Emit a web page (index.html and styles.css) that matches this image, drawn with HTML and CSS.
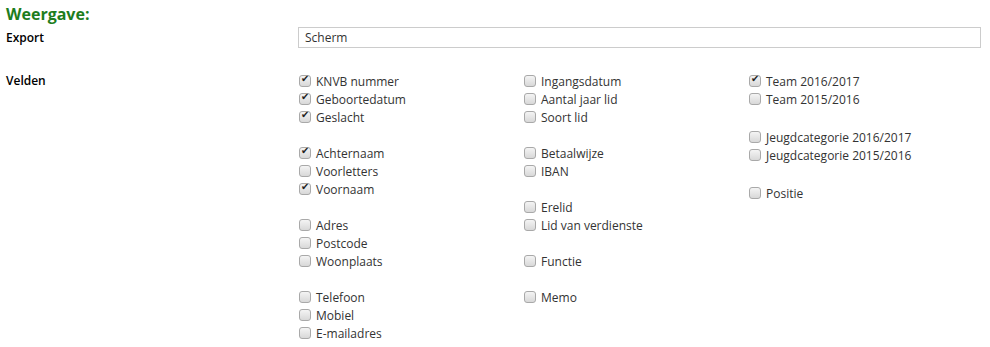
FILE: index.html
```html
<!DOCTYPE html>
<html lang="nl">
<head>
<meta charset="UTF-8">
<link rel="stylesheet" href="styles.css">
<title>Weergave</title>
</head>
<body>

<h2 class="section-title">Weergave:</h2>

<div class="form-row">
  <label class="form-label" for="export">Export</label>
  <div class="form-field">
    <input type="text" id="export" class="text-input" value="Scherm">
  </div>
</div>

<div class="form-row form-row-fields">
  <div class="form-label">Velden</div>
  <div class="form-field columns">

    <!-- kolom 1 -->
    <div class="col">
      <label class="check"><input type="checkbox" checked> KNVB nummer</label>
      <label class="check"><input type="checkbox" checked> Geboortedatum</label>
      <label class="check"><input type="checkbox" checked> Geslacht</label>
      <div class="gap"></div>
      <label class="check"><input type="checkbox" checked> Achternaam</label>
      <label class="check"><input type="checkbox"> Voorletters</label>
      <label class="check"><input type="checkbox" checked> Voornaam</label>
      <div class="gap"></div>
      <label class="check"><input type="checkbox"> Adres</label>
      <label class="check"><input type="checkbox"> Postcode</label>
      <label class="check"><input type="checkbox"> Woonplaats</label>
      <div class="gap"></div>
      <label class="check"><input type="checkbox"> Telefoon</label>
      <label class="check"><input type="checkbox"> Mobiel</label>
      <label class="check"><input type="checkbox"> E-mailadres</label>
    </div>

    <!-- kolom 2 -->
    <div class="col">
      <label class="check"><input type="checkbox"> Ingangsdatum</label>
      <label class="check"><input type="checkbox"> Aantal jaar lid</label>
      <label class="check"><input type="checkbox"> Soort lid</label>
      <div class="gap"></div>
      <label class="check"><input type="checkbox"> Betaalwijze</label>
      <label class="check"><input type="checkbox"> IBAN</label>
      <div class="gap"></div>
      <label class="check"><input type="checkbox"> Erelid</label>
      <label class="check"><input type="checkbox"> Lid van verdienste</label>
      <div class="gap"></div>
      <label class="check"><input type="checkbox"> Functie</label>
      <div class="gap"></div>
      <label class="check"><input type="checkbox"> Memo</label>
    </div>

    <!-- kolom 3 -->
    <div class="col col-wide-gap">
      <label class="check"><input type="checkbox" checked> Team 2016/2017</label>
      <label class="check"><input type="checkbox"> Team 2015/2016</label>
      <div class="gap"></div>
      <label class="check"><input type="checkbox"> Jeugdcategorie 2016/2017</label>
      <label class="check"><input type="checkbox"> Jeugdcategorie 2015/2016</label>
      <div class="gap"></div>
      <label class="check"><input type="checkbox"> Positie</label>
    </div>

  </div>
</div>

</body>
</html>
```

FILE: styles.css
```css
body { margin: 0; padding: 4px 6px; font-family: "Open Sans", "DejaVu Sans", sans-serif; font-size: 12px; color: #222; background: #fff; }
.section-title { margin: 0 0 3px; font-size: 16px; font-weight: bold; color: #1d7d1d; line-height: 20px; }
.form-row { display: grid; grid-template-columns: 292px 683px; }
.form-label { color: #000; font-weight: 600; line-height: 18px; padding-top: 2px; }
.form-row-fields { margin-top: 24px; }
.form-row-fields .form-label { padding-top: 0; }
.text-input { box-sizing: border-box; width: 683px; height: 21px; margin: 0; padding: 0 6px; border: 1px solid #ccc; font: inherit; color: #333; }
.columns { display: grid; grid-template-columns: 225px 225px 225px; padding-left: 1px; }
.col { display: flex; flex-direction: column; }
.gap { height: 18px; }
.col-wide-gap .gap { height: 20px; }
.check { display: flex; align-items: center; height: 18px; color: #333; cursor: pointer; white-space: nowrap; }
.check input { appearance: none; -webkit-appearance: none; box-sizing: border-box; width: 12px; height: 12px; margin: 0 5px 0 0; border: 1px solid #a9a9a9; border-radius: 3px; background: linear-gradient(#f4f4f4, #d8d8d8); position: relative; flex: none; }
.check input:checked::before { content: "\2714"; position: absolute; left: 1px; top: -3px; font-size: 10px; color: #222; }
```
